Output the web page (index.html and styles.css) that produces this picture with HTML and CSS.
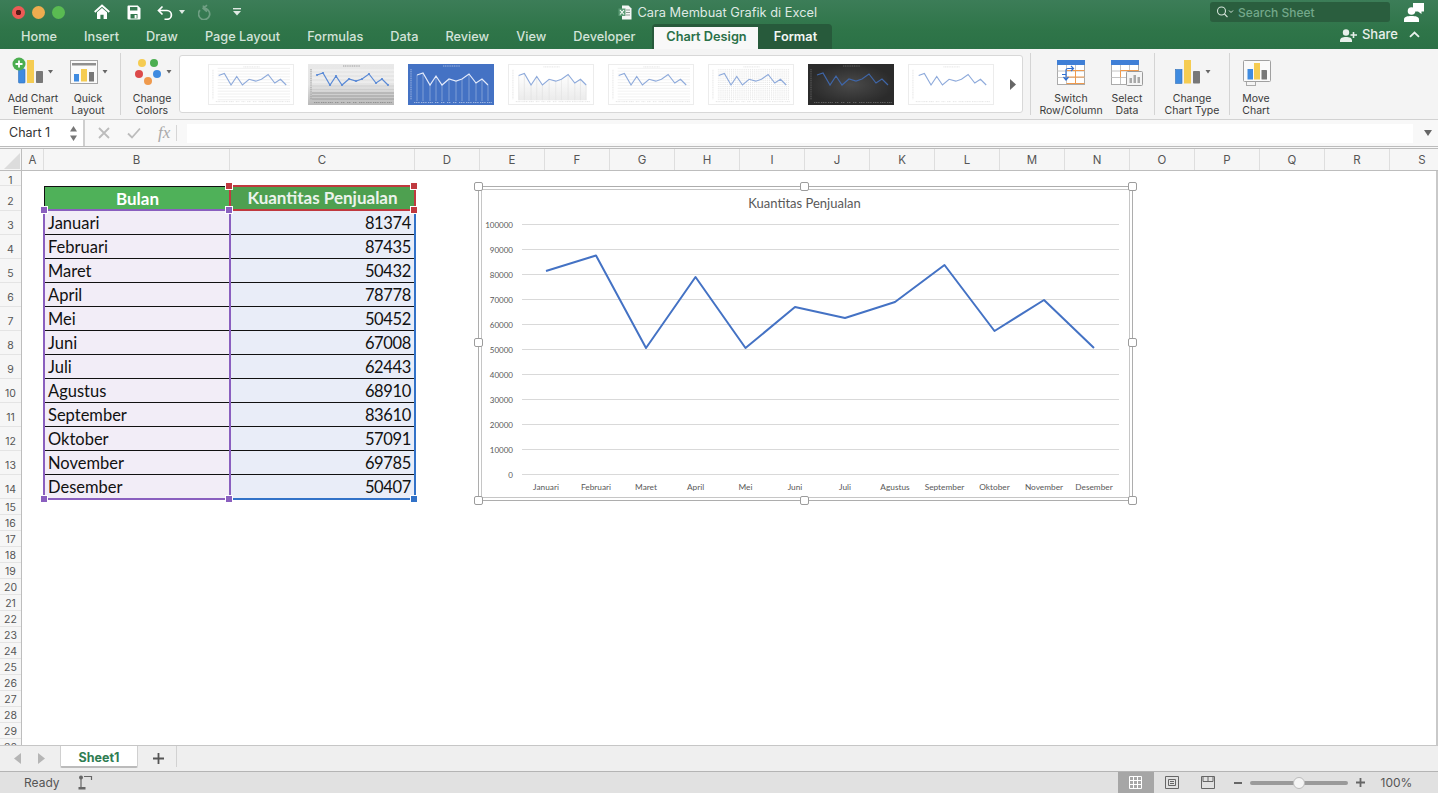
FILE: index.html
```html
<!DOCTYPE html>
<html lang="en">
<head>
<meta charset="utf-8">
<title>Cara Membuat Grafik di Excel</title>
<link rel="stylesheet" href="styles.css">
</head>
<body>
<svg class="defs" width="0" height="0">
  <defs>
    <symbol id="tgrid" viewBox="0 0 86 41"><path d="M8 3.5H84M8 6.5H84M8 9.5H84M8 12.5H84M8 15.5H84M8 18.5H84M8 21.5H84M8 24.5H84M8 27.5H84M8 30.5H84M8 33.5H84M8 36.5H84" fill="none" stroke="currentColor" stroke-width=".6"/></symbol>
    <symbol id="tline" viewBox="0 0 86 41"><polyline points="9,11 15,9 22,21 28,12 34,21 41,15 48,17 54,15 61,10 68,19 74,15 80,21" fill="none" stroke="currentColor" stroke-width="1.200"/></symbol>
    <symbol id="tmark" viewBox="0 0 86 41"><g fill="currentColor"><circle cx="9" cy="11" r="1.100"/><circle cx="15" cy="9" r="1.100"/><circle cx="22" cy="21" r="1.100"/><circle cx="28" cy="12" r="1.100"/><circle cx="34" cy="21" r="1.100"/><circle cx="41" cy="15" r="1.100"/><circle cx="48" cy="17" r="1.100"/><circle cx="54" cy="15" r="1.100"/><circle cx="61" cy="10" r="1.100"/><circle cx="68" cy="19" r="1.100"/><circle cx="74" cy="15" r="1.100"/><circle cx="80" cy="21" r="1.100"/></g></symbol>
    <symbol id="tdrop" viewBox="0 0 86 41"><path d="M9 11V37M15 9V37M22 21V37M28 12V37M34 21V37M41 15V37M48 17V37M54 15V37M61 10V37M68 19V37M74 15V37M80 21V37" fill="none" stroke="currentColor" stroke-width=".6"/></symbol>
    <symbol id="tlabels" viewBox="0 0 86 41"><path d="M35 2H52M6 38.5H12M13 38.5H19M20 38.5H25M27 38.5H31M33 38.5H37M39 38.5H43M45 38.5H49M51 38.5H57M58 38.5H64M65 38.5H71M72 38.5H78M79 38.5H84M3 5V36" fill="none" stroke="currentColor" stroke-width=".7" stroke-dasharray="1.2 .6"/></symbol>
    <pattern id="tdots" width="2" height="2" patternUnits="userSpaceOnUse"><rect width="1" height="1" fill="#e2e2e2"/></pattern>
    <linearGradient id="tsilver" x1="0" y1="0" x2="0" y2="1"><stop offset="0" stop-color="#e9e9e9"/><stop offset=".5" stop-color="#e4e4e4"/><stop offset="1" stop-color="#b9b9b9"/></linearGradient>
    <linearGradient id="tfade" x1="0" y1="0" x2="0" y2="1"><stop offset="0" stop-color="#fff"/><stop offset="1" stop-color="#ebebeb"/></linearGradient>
    <radialGradient id="tdark"><stop offset="0" stop-color="#4a4a4a"/><stop offset="1" stop-color="#2b2b2b"/></radialGradient>
  </defs>
</svg>

<header class="titlebar">
  <div class="topline">
    <div class="side left">
      <span class="light red"></span><span class="light yellow"></span><span class="light green"></span>
      <svg class="q-home" width="16" height="16" viewBox="0 0 16 16"><path d="M.7 8 8 1.5 15.3 8" fill="none" stroke="#fff" stroke-width="1.8"/><path d="M3 8.2 8 4l5 4.2V15H9.600v-4.300H6.400V15H3z" fill="#fff"/></svg>
      <svg class="q-save" width="14" height="15" viewBox="0 0 14 15"><path fill-rule="evenodd" d="M1.500 .5h9.300l2.700 2.700v10.300a1 1 0 0 1-1 1h-11a1 1 0 0 1-1-1v-12a1 1 0 0 1 1-1zM3 2v3.600h7.400V2zM3.500 9v4.400h7V9z" fill="#fff"/><rect x="7.600" y="10" width="2" height="3.400" fill="#fff"/></svg>
      <svg class="q-undo" width="16" height="15" viewBox="0 0 16 15"><path d="M5.500 1.500 1.500 5.500l4 4M1.800 5.500H10a4.400 4.400 0 0 1 0 8.800H7.500" fill="none" stroke="#fff" stroke-width="1.700"/></svg>
      <svg class="q-caret" width="6" height="4" viewBox="0 0 6 4"><path d="M0 0h6L3 4z" fill="#dfe9e3"/></svg>
      <svg class="q-redo" width="15" height="16" viewBox="0 0 15 16"><path d="M9 1.200 5.300 4.400 9 7.600M5.500 4.200V1.400M6 4.400a5.600 5.600 0 1 1-4 1.800" fill="none" stroke="#6f9f83" stroke-width="1.700"/></svg>
      <svg class="q-more" width="8" height="8" viewBox="0 0 8 8"><rect width="8" height="1.400" fill="#dfe9e3"/><path d="M0 3h8L4 7.500z" fill="#dfe9e3"/></svg>
    </div>
    <div class="doc">
      <svg width="14" height="15" viewBox="0 0 14 15"><path d="M4 .5h6.500L13.500 3.500v11H4z" fill="#f4f6f5"/><path d="M8 5h4M8 7.500h4M8 10h4" stroke="#8a9a90" stroke-width="1"/><rect x=".5" y="3.500" width="7" height="7.500" fill="#5c9c76"/><path d="m2 5 4 4.500M6 5 2 9.500" stroke="#fff" stroke-width="1.100"/></svg>
      <span>Cara Membuat Grafik di Excel</span>
    </div>
    <div class="side right">
      <div class="search">
        <svg width="18" height="12" viewBox="0 0 18 12"><circle cx="5.500" cy="5" r="4" fill="none" stroke="#d5e3da" stroke-width="1.100"/><path d="m8.500 8 3 3.200" stroke="#d5e3da" stroke-width="1.200"/><path d="m13 4.500 2 2 2-2" fill="none" stroke="#d5e3da"/></svg>
        <span>Search Sheet</span>
      </div>
      <svg class="person" width="20" height="19" viewBox="0 0 20 19"><path d="M9 0h11v8.500h-2.500V11L14 8.500H9z" fill="#fff"/><circle cx="7.500" cy="8" r="3.800" fill="#fff"/><path d="M0 19v-2.500c0-2.800 3.300-3.500 7.500-3.500s7.500.7 7.500 3.500V19z" fill="#fff"/></svg>
    </div>
  </div>
  <nav class="tabs">
    <span class="tab">Home</span><span class="tab">Insert</span><span class="tab">Draw</span><span class="tab">Page Layout</span><span class="tab">Formulas</span><span class="tab">Data</span><span class="tab">Review</span><span class="tab">View</span><span class="tab">Developer</span>
    <div class="context"><span class="tab-on">Chart Design</span><span class="tab-format">Format</span></div>
    <div class="share">
      <svg width="17" height="13" viewBox="0 0 17 13"><circle cx="6" cy="3.500" r="3.200" fill="#e8f0eb"/><path d="M0 13v-1.500C0 9 2.500 8 6 8s6 1 6 3.500V13z" fill="#e8f0eb"/><path d="M13.500 3v6M10.500 6h6.500" stroke="#e8f0eb" stroke-width="1.600"/></svg>
      <span>Share</span>
      <svg class="collapse" width="11" height="7" viewBox="0 0 11 7"><path d="m1 5.800 4.500-4.300L10 5.800" fill="none" stroke="#e8f0eb" stroke-width="1.800"/></svg>
    </div>
  </nav>
</header>

<section class="ribbon">
  <div class="rb b1">
    <svg width="66" height="30" viewBox="0 0 66 30"><rect x="18.500" y="12" width="6.500" height="14" rx=".8" fill="#3f8be0" stroke="#2f6fb8" stroke-width=".6"/><rect x="27" y="3" width="7" height="23" fill="#f5cc52"/><rect x="36" y="14" width="7" height="12" rx=".8" fill="#787878"/><circle cx="19" cy="7" r="6.500" fill="#4cae50"/><path d="M19 3.500v7M15.500 7h7" stroke="#fff" stroke-width="1.800"/><path d="M48 13h5l-2.500 3.500z" fill="#666"/></svg>
    <span>Add Chart<br>Element</span>
  </div>
  <div class="rb b2">
    <svg width="44" height="30" viewBox="0 0 44 30"><rect x="4.500" y="3.500" width="27" height="23" fill="#fafafa" stroke="#a5a5a5"/><rect x="6" y="6" width="24" height="2.500" fill="#8f8f8f"/><rect x="8" y="17" width="5" height="7.500" fill="#3f8be0"/><rect x="15" y="12" width="6" height="12.500" fill="#f5cc52"/><rect x="23" y="15" width="5" height="9.500" fill="#787878"/><path d="M36.500 13h5L39 16.500z" fill="#666"/></svg>
    <span>Quick<br>Layout</span>
  </div>
  <i class="rsep s1"></i>
  <div class="rb b3">
    <svg width="54" height="30" viewBox="0 0 54 30"><circle cx="17" cy="6" r="4" fill="#f5cc52"/><circle cx="29" cy="6" r="4" fill="#4cae50"/><circle cx="14" cy="17" r="4" fill="#dc4a4a"/><circle cx="32" cy="17" r="4" fill="#3f8be0"/><circle cx="23" cy="24" r="4" fill="#ef9a4d"/><path d="M41.500 13h5L44 16.500z" fill="#666"/></svg>
    <span>Change<br>Colors</span>
  </div>
  <div class="gallery">
    <svg class="thumb t1" viewBox="0 0 86 41"><use href="#tgrid"/><use class="lb" href="#tlabels"/><use class="ln" href="#tline"/></svg>
    <svg class="thumb t2" viewBox="0 0 86 41"><rect width="86" height="41" fill="url(#tsilver)"/><path d="M4 6H86M4 10H86M4 14H86M4 18H86" stroke="#fafafa" stroke-width=".7"/><path d="M4 22H86M4 25.500H86" stroke="#c8c8c8" stroke-width=".7"/><path d="M4 29H86M4 32H86M4 35H86" stroke="#8a8a8a" stroke-width=".7"/><use class="lb" href="#tlabels"/><use class="ln" href="#tline"/><use class="ln" href="#tmark"/></svg>
    <svg class="thumb t3" viewBox="0 0 86 41"><rect width="86" height="41" fill="#4472c4"/><use href="#tdrop"/><use class="lb" href="#tlabels"/><use class="ln" href="#tline"/></svg>
    <svg class="thumb t4" viewBox="0 0 86 41"><path d="M9 11 15 9 22 21 28 12 34 21 41 15 48 17 54 15 61 10 68 19 74 15 80 21V37H9z" fill="url(#tfade)"/><use href="#tdrop"/><use class="lb" href="#tlabels"/><use class="ln" href="#tline"/></svg>
    <svg class="thumb t5" viewBox="0 0 86 41"><use href="#tgrid"/><use class="lb" href="#tlabels"/><use class="ln" href="#tline"/></svg>
    <svg class="thumb t6" viewBox="0 0 86 41"><rect x="8" y="4" width="76" height="33" fill="url(#tdots)"/><use class="lb" href="#tlabels"/><use class="ln" href="#tline"/></svg>
    <svg class="thumb t7" viewBox="0 0 86 41"><rect width="86" height="41" fill="url(#tdark)"/><use class="lb" href="#tlabels"/><use class="ln" href="#tline"/></svg>
    <svg class="thumb t8" viewBox="0 0 86 41"><use class="lb" href="#tlabels"/><use class="ln" href="#tline"/></svg>
    <svg class="gal-next" width="8" height="11" viewBox="0 0 8 11"><path d="M1 0v11l6-5.500z" fill="#666"/></svg>
  </div>
  <i class="rsep s2"></i>
  <div class="rb b4">
    <svg width="62" height="30" viewBox="0 0 62 30"><rect x="17.500" y="3.500" width="27" height="24" fill="#fff" stroke="#aaa"/><path d="M17.500 14h27M17.500 20.500h27M26.500 8v19M35.500 8v19" stroke="#c4c4c4" fill="none"/><rect x="17" y="3" width="28" height="5" fill="#3f7fd6"/><path d="M26.500 13.500h18M26.500 20h18M26.500 26.500h18M35.500 13.500v13" stroke="#ef9a4d" fill="none"/><path d="M26 18v-4.500a2 2 0 0 1 2-2h5M31 9l2.500 2.500L31 14M22 17.500h4.500M26 18v3.500M23.500 20l2.500 3 2.500-3" stroke="#2f6fd0" stroke-width="1.200" fill="none"/></svg>
    <span>Switch<br>Row/Column</span>
  </div>
  <div class="rb b5">
    <svg width="50" height="30" viewBox="0 0 50 30"><rect x="9.500" y="3.500" width="27" height="24" fill="#fff" stroke="#aaa"/><path d="M9.500 14h27M9.500 20.500h27M18.500 8v19M27.500 8v19" stroke="#c4c4c4" fill="none"/><rect x="9" y="3" width="28" height="5" fill="#3f7fd6"/><path d="M18.500 20.500V13.500h18v7" stroke="#ef9a4d" fill="none"/><rect x="24.500" y="14.500" width="16" height="14" rx="1" fill="#f4f4f4" stroke="#9a9a9a"/><rect x="27.500" y="21" width="2.500" height="5" fill="#a8a8a8"/><rect x="31.500" y="18" width="2.500" height="8" fill="#a8a8a8"/><rect x="35.500" y="20" width="2.500" height="6" fill="#a8a8a8"/></svg>
    <span>Select<br>Data</span>
  </div>
  <i class="rsep s3"></i>
  <div class="rb b6">
    <svg width="70" height="30" viewBox="0 0 70 30"><rect x="18.500" y="12.500" width="6.500" height="14" fill="#3f8be0" stroke="#2f6fb8" stroke-width=".6"/><rect x="27" y="3" width="7" height="23.500" fill="#f5cc52"/><rect x="36" y="14" width="7" height="12.500" rx=".8" fill="#787878"/><path d="M48.500 13h5L51 16.500z" fill="#666"/></svg>
    <span>Change<br>Chart Type</span>
  </div>
  <i class="rsep s4"></i>
  <div class="rb b7">
    <svg width="40" height="30" viewBox="0 0 40 30"><rect x="10.500" y="23.500" width="9" height="5" fill="#f4f4f4" stroke="#aaa"/><rect x="7.500" y="3.500" width="27" height="21" rx="1" fill="#fafafa" stroke="#a0a0a0"/><rect x="11.500" y="12" width="5.500" height="10.500" fill="#3f8be0"/><rect x="18" y="6" width="6" height="16.500" fill="#f5cc52"/><rect x="25.500" y="13" width="5.500" height="9.500" rx=".6" fill="#787878"/></svg>
    <span>Move<br>Chart</span>
  </div>
</section>

<section class="formula">
  <div class="namebox">
    <span>Chart 1</span>
    <svg width="7" height="15" viewBox="0 0 7 15"><path d="M0 5.500h7L3.500 0zM0 9.500h7L3.500 15z" fill="#777"/></svg>
  </div>
  <div class="fx-tools">
    <svg width="12" height="12" viewBox="0 0 12 12"><path d="m1 1 10 10M11 1 1 11" stroke="#bcbcbc" stroke-width="1.800"/></svg>
    <svg width="14" height="12" viewBox="0 0 14 12"><path d="m1 6.500 4 4L13 1.500" fill="none" stroke="#bcbcbc" stroke-width="1.800"/></svg>
    <span class="fx">fx</span>
  </div>
  <div class="fx-input"></div>
  <svg class="fx-drop" width="8" height="6" viewBox="0 0 8 6"><path d="M0 0h8L4 6z" fill="#666"/></svg>
</section>

<div class="colhead">
  <div class="corner"><svg width="21" height="21" viewBox="0 0 21 21"><path d="M20 4v16H4z" fill="#dcdcdc"/></svg></div>
  <span class="col a">A</span><span class="col b">B</span><span class="col c">C</span><span class="col">D</span><span class="col">E</span><span class="col">F</span><span class="col">G</span><span class="col">H</span><span class="col">I</span><span class="col">J</span><span class="col">K</span><span class="col">L</span><span class="col">M</span><span class="col">N</span><span class="col">O</span><span class="col">P</span><span class="col">Q</span><span class="col">R</span><span class="col">S</span>
</div>

<main class="sheet">
  <div class="rowhead">
    <span class="r r1">1</span><span class="r r2">2</span>
    <span class="r rd">3</span><span class="r rd">4</span><span class="r rd">5</span><span class="r rd">6</span><span class="r rd">7</span><span class="r rd">8</span><span class="r rd">9</span><span class="r rd">10</span><span class="r rd">11</span><span class="r rd">12</span><span class="r rd">13</span><span class="r rd">14</span>
    <span class="r">15</span><span class="r">16</span><span class="r">17</span><span class="r">18</span><span class="r">19</span><span class="r">20</span><span class="r">21</span><span class="r">22</span><span class="r">23</span><span class="r">24</span><span class="r">25</span><span class="r">26</span><span class="r">27</span><span class="r">28</span><span class="r">29</span><span class="r">30</span>
  </div>
  <div class="canvas">
    <div class="table">
      <div class="th th-b">Bulan</div><div class="th th-c">Kuantitas Penjualan</div>
      <div class="td m">Januari</div><div class="td n">81374</div>
      <div class="td m">Februari</div><div class="td n">87435</div>
      <div class="td m">Maret</div><div class="td n">50432</div>
      <div class="td m">April</div><div class="td n">78778</div>
      <div class="td m">Mei</div><div class="td n">50452</div>
      <div class="td m">Juni</div><div class="td n">67008</div>
      <div class="td m">Juli</div><div class="td n">62443</div>
      <div class="td m">Agustus</div><div class="td n">68910</div>
      <div class="td m">September</div><div class="td n">83610</div>
      <div class="td m">Oktober</div><div class="td n">57091</div>
      <div class="td m">November</div><div class="td n">69785</div>
      <div class="td m last">Desember</div><div class="td n last">50407</div>
    </div>

    <div class="range rg-blue"></div>
    <div class="range rg-purple"></div>
    <div class="range rg-red"></div>
    <i class="hnd red h1"></i><i class="hnd red h2"></i><i class="hnd red h3"></i>
    <i class="hnd purple h4"></i><i class="hnd purple h5"></i><i class="hnd purple h6"></i><i class="hnd purple h7"></i>
    <i class="hnd blue h8"></i>

    <div class="chart">
      <svg class="plot" width="654" height="314" viewBox="478 186 654 314">
        <g class="gridlines">
          <path d="M522 224.500H1119M522 249.500H1119M522 274.500H1119M522 299.500H1119M522 324.500H1119M522 349.500H1119M522 374.500H1119M522 399.500H1119M522 424.500H1119M522 449.500H1119M522 474.500H1119"/>
        </g>
        <text class="ct" x="804.500" y="207.500">Kuantitas Penjualan</text>
        <g class="yl">
          <text x="513" y="227.500">100000</text><text x="513" y="252.500">90000</text><text x="513" y="277.500">80000</text><text x="513" y="302.500">70000</text><text x="513" y="327.500">60000</text><text x="513" y="352.500">50000</text><text x="513" y="377.500">40000</text><text x="513" y="402.500">30000</text><text x="513" y="427.500">20000</text><text x="513" y="452.500">10000</text><text x="513" y="477.500">0</text>
        </g>
        <g class="xl">
          <text x="546" y="490">Januari</text><text x="596" y="490">Februari</text><text x="646" y="490">Maret</text><text x="695.500" y="490">April</text><text x="745.500" y="490">Mei</text><text x="795" y="490">Juni</text><text x="845" y="490">Juli</text><text x="895" y="490">Agustus</text><text x="944.500" y="490">September</text><text x="994.500" y="490">Oktober</text><text x="1044" y="490">November</text><text x="1094" y="490">Desember</text>
        </g>
        <polyline class="series" points="546,271 596,255.500 646,348 695.500,277 745.500,348 795,307 845,318 895,302 944.500,265 994.500,331 1044,300 1094,348"/>
      </svg>
      <i class="ch c1"></i><i class="ch c2"></i><i class="ch c3"></i><i class="ch c4"></i><i class="ch c5"></i><i class="ch c6"></i><i class="ch c7"></i><i class="ch c8"></i>
    </div>
  </div>
</main>

<div class="sheetbar">
  <svg class="nav" width="32" height="11" viewBox="0 0 32 11"><path d="M7 0v11L0 5.500zM24 0v11l7-5.500z" fill="#b5b5b5"/></svg>
  <div class="sheettab">Sheet1</div>
  <svg class="addsheet" width="11" height="11" viewBox="0 0 11 11"><path d="M5.500 0v11M0 5.500h11" stroke="#555" stroke-width="1.800"/></svg>
  <i class="barsep"></i>
</div>

<footer class="status">
  <span class="ready">Ready</span>
  <svg class="macro" width="15" height="15" viewBox="0 0 15 15"><circle cx="3" cy="2.500" r="2" fill="#666"/><path d="M3 4v8M6 1.500h7.500V5" stroke="#666" stroke-width="1.200" fill="none"/><rect x=".5" y="12" width="7" height="2.500" fill="#666"/></svg>
  <div class="viewbtns">
    <div class="vb on"><svg width="13" height="13" viewBox="0 0 13 13"><path d="M.5.500h12v12H.500zM4.500.500v12M8.500.500v12M.500 4.500h12M.500 8.500h12" fill="none" stroke="#fff"/></svg></div>
    <div class="vb"><svg width="14" height="13" viewBox="0 0 14 13"><path d="M.5.500h13v12H.500zM3.500 3.500h7v6h-7zM5 5.500h4M5 7.500h4" fill="none" stroke="#666"/></svg></div>
    <div class="vb"><svg width="14" height="13" viewBox="0 0 14 13"><path d="M.5.500h13v12H.500zM2 5.500h10M7 .500v5M2 .500v5M12 .500v5" fill="none" stroke="#666"/></svg></div>
  </div>
  <i class="zminus"></i>
  <div class="slider"><i class="knob"></i></div>
  <svg class="zplus" width="9" height="9" viewBox="0 0 9 9"><path d="M4.500 0v9M0 4.500h9" stroke="#666" stroke-width="1.800"/></svg>
  <span class="zoom">100%</span>
</footer>
</body>
</html>
```

FILE: styles.css
```css
* { box-sizing: border-box; }
html, body { margin: 0; height: 100%; }
body {
  width: 1438px;
  height: 793px;
  overflow: hidden;
  display: flex;
  flex-direction: column;
  background: #fff;
  font-family: Inter, "Liberation Sans", sans-serif;
  color: #333;
}
.defs { position: absolute; }
i { display: block; }

/* title bar */
.titlebar {
  height: 49px;
  flex: none;
  background: linear-gradient(#3c7d58, #2f7549 60%, #2b7146);
  color: #fff;
}
.topline { height: 24px; display: flex; align-items: center; }
.side { flex: 1 1 0; display: flex; align-items: center; }
.side.left { padding-left: 11.5px; }
.side.right { justify-content: flex-end; padding-right: 14px; }
.light { width: 13px; height: 13px; border-radius: 50%; margin-right: 7px; flex: none; }
.light.red { background: radial-gradient(circle, #5a1a18 0 2.5px, #ed5a55 3px); }
.light.yellow { background: #eeac4f; }
.light.green { background: #5abb52; }
.q-home { margin-left: 22.5px; }
.q-save { margin-left: 17px; }
.q-undo { margin-left: 16px; }
.q-caret { margin-left: 6px; }
.q-redo { margin-left: 13px; }
.q-more { margin-left: 20px; }
.doc { display: flex; align-items: center; gap: 5px; padding-top: 1px; font-size: 12.8px; color: #dfe9e3; white-space: nowrap; }
.search {
  width: 180px; height: 20px; margin-right: 14px;
  display: flex; align-items: center; gap: 4px; padding-left: 6px;
  background: #2a5e3e; border-radius: 3px;
  color: #73a88a; font-size: 12px; font-weight: 500;
}
.tabs { height: 25px; display: flex; align-items: flex-end; padding-left: 7.5px; font-size: 12.75px; font-weight: 500; }
.tab { height: 25px; line-height: 26px; padding: 0 13.5px; color: #d3e3d9; white-space: nowrap; }
.context {
  display: flex; height: 25px; margin-left: 3.5px; padding: 3px 0 0 2px;
  background: #275a3b; border-radius: 4px 4px 0 0;
}
.tab-on { width: 104px; background: #f8f8f8; color: #2a7048; font-weight: 600; text-align: center; line-height: 20px; }
.tab-format { width: 74px; color: #f2f6f3; font-weight: 600; text-align: center; line-height: 20px; }
.share { margin-left: auto; height: 25px; display: flex; align-items: flex-start; padding-top: 3px; padding-right: 18px; color: #e8f0eb; font-size: 13px; line-height: 14px; }
.share svg { margin-right: 5px; margin-top: 2px; }
.share .collapse { margin: 4px 0 0 11px; }

/* ribbon */
.ribbon {
  height: 71px; flex: none; display: flex; padding-top: 6px;
  background: #f4f4f4; border-bottom: 1px solid #d2d2d2;
}
.rb { display: flex; flex-direction: column; align-items: center; flex: none; padding-top: 2px; font-size: 10.5px; line-height: 12px; color: #3a3a3a; text-align: center; white-space: nowrap; }
.rb svg { display: block; }
.rb span { display: block; margin-top: 6px; }
.b1 { width: 66px; }
.b2 { width: 44px; }
.b3 { width: 54px; margin-left: 4px; }
.b4 { width: 62px; margin-left: 9px; }
.b5 { width: 50px; }
.b6 { width: 70px; margin-left: 2px; }
.b7 { width: 40px; margin-left: 6px; }
.rsep { width: 1px; height: 62px; margin-top: -2px; background: #d4d4d4; flex: none; }
.s1 { margin-left: 10px; }
.s2 { margin-left: 7px; }
.s3 { margin-left: 2px; }
.s4 { margin-left: 2px; }
.gallery {
  width: 844px; height: 58px; flex: none; display: flex; align-items: center; gap: 14px;
  padding-left: 28px; background: #fff; border: 1px solid #d8d8d8; border-radius: 3px;
}
.thumb { width: 86px; height: 41px; flex: none; display: block; filter: blur(.3px); border: 1px solid #ececec; }
.thumb use { width: 86px; height: 41px; }
.gal-next { flex: none; margin-left: 1px; }
.t1 { color: #e4e4e4; }
.t1 .ln, .t5 .ln, .t6 .ln, .t4 .ln, .t8 .ln { color: #8eaadb; }
.t1 .lb, .t5 .lb, .t6 .lb, .t4 .lb, .t8 .lb { color: #d8d8d8; }
.t2 { border: 0; }
.t2 .ln { color: #5a8ad6; }
.t2 .lb { color: #808080; }
.t3 { color: #a9bde3; border: 0; }
.t3 .ln { color: #e3eafa; }
.t3 .lb { color: #c5d2ee; }
.t4 { color: #e0e0e0; }
.t5 { color: #e8e8e8; }
.t7 { border: 0; }
.t7 .ln { color: #3f66a8; }
.t7 .lb { color: #777; }

/* formula bar */
.formula {
  height: 29px; flex: none; display: flex; align-items: center;
  background: #f8f8f8; border-bottom: 3px double #bcbcbc;
}
.namebox {
  width: 85px; height: 100%; flex: none; display: flex; align-items: center; justify-content: space-between;
  padding: 0 6px 0 9px; background: #fff; border-right: 2px solid #cfcfcf; font-size: 12.5px; color: #333;
}
.namebox span { padding-bottom: 2px; }
.fx-tools { width: 102px; flex: none; display: flex; align-items: center; padding-left: 13px; height: 100%; }
.fx-tools svg:nth-child(2) { margin-left: 17px; }
.fx { margin-left: 17px; padding-right: 6px; border-right: 1px solid #d6d6d6; font: italic 17px/16px "Liberation Serif", serif; color: #a9a9a9; }
.fx-input { width: 1226px; height: 19px; flex: none; background: #fff; }
.fx-drop { margin-left: 11px; }

/* column headers */
.colhead {
  height: 22px; flex: none; display: flex; overflow: hidden;
  background: #f6f6f6; border-bottom: 1px solid #bdbdbd;
  font-size: 11.5px; color: #555;
}
.corner { width: 22px; flex: none; border-right: 1px solid #bdbdbd; }
.corner svg { display: block; }
.col { width: 65px; flex: none; line-height: 23px; text-align: center; border-right: 1px solid #dedede; }
.col.a { width: 22px; }
.col.b { width: 186px; }
.col.c { width: 185px; }

/* sheet */
.sheet { flex: 1; min-height: 0; display: flex; overflow: hidden; border-right: 2px solid #c9c9c9; }
.rowhead { width: 22px; flex: none; background: #f6f6f6; border-right: 1px solid #bdbdbd; font-size: 10.5px; color: #555; }
.r { display: block; height: 16px; line-height: 18px; text-align: center; border-bottom: 1px solid #e4e4e4; }
.r1 { height: 15px; line-height: 19px; }
.r2 { height: 25px; line-height: 32px; }
.rd { height: 24px; line-height: 29px; }
.canvas { position: relative; flex: 1; min-width: 0; background: #fff; }

.table {
  display: grid; grid-template-columns: 186px 185px; grid-template-rows: 25px repeat(12, 24px);
  margin: 15px 0 0 22px; width: 371px;
  font-family: Lato, "Liberation Sans", sans-serif; color: #111;
}
.th { display: flex; align-items: center; justify-content: center; padding-bottom: 2px; font-size: 17px; font-weight: 700; color: #fff; }
.th-b { background: #4fb159; border-top: 1px solid #111; border-left: 1px solid #111; }
.th-c { background: #4ea050; color: #ecf3ec; }
.td { font-size: 16.5px; line-height: 25px; border-bottom: 1px solid #111; white-space: nowrap; }
.m { background: #f2edf7; padding-left: 4px; }
.n { background: #e9edf8; text-align: right; padding-right: 4px; letter-spacing: -.35px; }
.td.last { border-bottom: 0; }

.range { position: absolute; }
.rg-red { left: 207px; top: 14px; width: 187px; height: 26px; border: 2px solid #c0393f; }
.rg-purple { left: 21px; top: 38px; width: 188px; height: 291px; border: 2px solid #8a5fbf; }
.rg-blue { left: 208px; top: 39px; width: 186px; height: 290px; border-right: 2px solid #3272c8; border-bottom: 2px solid #3272c8; }
.hnd { position: absolute; width: 6px; height: 6px; outline: 1px solid #fff; }
.hnd.red { background: #c0393f; }
.hnd.purple { background: #8a5fbf; }
.hnd.blue { background: #3272c8; }
.h1 { left: 204px; top: 12px; }
.h2 { left: 389px; top: 12px; }
.h3 { left: 389px; top: 36px; }
.h4 { left: 19px; top: 36px; }
.h5 { left: 204px; top: 36px; }
.h6 { left: 19px; top: 325px; }
.h7 { left: 204px; top: 325px; }
.h8 { left: 389px; top: 325px; }

.chart {
  position: absolute; left: 456px; top: 15px; width: 655px; height: 315px;
  background: #fff; border: 1px solid #adadad;
}
.chart::before { content: ""; position: absolute; inset: 2px; border: 1px solid #c6c6c6; }
.plot { position: absolute; left: -1px; top: -1px; display: block; font-family: Lato, "Liberation Sans", sans-serif; }
.gridlines path { fill: none; stroke: #d9d9d9; stroke-width: 1; }
.ct { font-size: 13px; fill: #595959; text-anchor: middle; }
.yl text { font-size: 8px; fill: #595959; text-anchor: end; }
.xl text { font-size: 8.3px; fill: #595959; text-anchor: middle; }
.series { fill: none; stroke: #4472c4; stroke-width: 2; stroke-linejoin: round; }
.ch { position: absolute; width: 9px; height: 9px; background: #fff; border: 1px solid #9c9c9c; border-radius: 2px; }
.c1 { left: -5px; top: -5px; }
.c2 { left: 321px; top: -5px; }
.c3 { right: -5px; top: -5px; }
.c4 { left: -5px; top: 151px; }
.c5 { right: -5px; top: 151px; }
.c6 { left: -5px; bottom: -5px; }
.c7 { left: 321px; bottom: -5px; }
.c8 { right: -5px; bottom: -5px; }

/* sheet tabs */
.sheetbar {
  height: 26px; flex: none; display: flex; align-items: flex-start;
  background: #efefef; border-top: 1px solid #c6c6c6;
}
.nav { margin: 7px 0 0 14px; }
.sheettab {
  width: 78px; height: 22px; margin-left: 14px; background: #fff;
  border: 1px solid #d0d0d0; border-top: 0; border-bottom: 2px solid #bbb; border-radius: 0 0 2px 2px;
  color: #2f7d52; font-size: 12.5px; font-weight: 700; line-height: 23px; text-align: center;
}
.addsheet { margin: 7px 0 0 15px; }
.barsep { width: 1px; height: 21px; margin-left: 12px; background: #d2d2d2; }

/* status bar */
.status {
  height: 22px; flex: none; display: flex; align-items: center;
  background: #e1e1e1; border-top: 1px solid #b4b4b4; font-size: 12px; color: #555;
}
.ready { margin-left: 24px; }
.macro { margin-left: 18px; }
.viewbtns { margin-left: 1025px; display: flex; height: 100%; }
.vb { width: 36px; display: flex; align-items: center; justify-content: center; }
.vb.on { background: #a6a6a6; }
.zminus { width: 8px; height: 2px; margin-left: 8px; background: #666; }
.slider { position: relative; width: 98px; height: 4px; margin-left: 8px; background: #9a9a9a; border-radius: 2px; }
.knob { position: absolute; left: 43px; top: -4px; width: 12px; height: 12px; border-radius: 50%; background: #f5f5f5; border: 1px solid #bbb; }
.zplus { margin-left: 8px; }
.zoom { margin-left: 16px; }
```
